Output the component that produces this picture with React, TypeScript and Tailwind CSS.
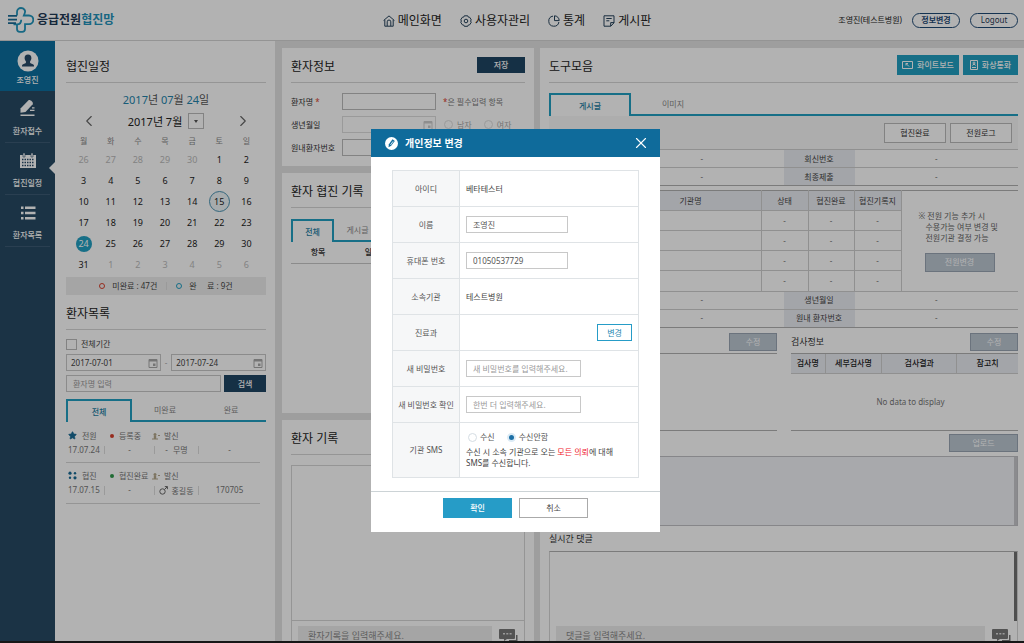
import React, { useState } from 'react';
import { ChevronLeft, ChevronRight, Star, X } from 'lucide-react';

const weekdays = ['월', '화', '수', '목', '금', '토', '일'];

// Monday-first weeks shown for July 2017
const days = [
  ...[26, 27, 28, 29, 30].map((d) => ({ key: `jun-${d}`, day: d, current: false })),
  ...Array.from({ length: 31 }, (_, i) => ({ key: `jul-${i + 1}`, day: i + 1, current: true })),
  ...[1, 2, 3, 4, 5, 6].map((d) => ({ key: `aug-${d}`, day: d, current: false })),
];

const patients = [
  {
    id: 1,
    type: '전원',
    status: '등록중',
    dot: 'bg-[#d8402c]',
    direction: '발신',
    date: '17.07.24',
    male: false,
    name: '무명',
    code: '-',
  },
  {
    id: 2,
    type: '협진',
    status: '협진완료',
    dot: 'bg-[#2f9a4b]',
    direction: '발신',
    date: '17.07.15',
    male: true,
    name: '홍길동',
    code: '170705',
  },
];

function Logo() {
  return (
    <svg viewBox="0 0 26 26" className="h-[26px] w-[26px]" fill="none" strokeWidth="1.8">
      <path
        d="M9 8.500V5a4 4 0 0 1 4-4c3 0 4.800 2.600 3.800 5L15.800 8.500H21a4.300 4.300 0 0 1 0 8.600h-4V22a2.800 2.800 0 0 1-2.800 2.800h-2.400A2.800 2.800 0 0 1 9 22v-4.500"
        stroke="#2196bd"
      />
      <path d="M5.500 17.300H9c3 0 4.200-1.800 4.200-4.600" stroke="#2196bd" />
      <path d="M0 8.800h9M0 12.600h9M0 16.200h8" stroke="#1b6c96" />
    </svg>
  );
}

function HomeIcon() {
  return (
    <svg viewBox="0 0 12 12" className="h-3 w-3" fill="none" stroke="#24415a">
      <path d="M.6 5.500 6 .9l5.400 4.600M1.800 5v6.200h8.400V5M4.200 11V6.800a1.800 1.800 0 0 1 3.600 0V11" />
    </svg>
  );
}

function GearIcon() {
  return (
    <svg viewBox="0 0 12 12" className="h-3 w-3" fill="none" stroke="#24415a">
      <path d="M4.300.8h3.400l.6 1.300 1.400.2 1.600 2.600-.8 1.100.8 1.200-1.600 2.600-1.400.2-.6 1.300H4.300l-.6-1.300-1.400-.2L.7 7.200 1.500 6 .7 4.900l1.600-2.600 1.400-.2z" />
      <circle cx="6" cy="6" r="1.800" />
    </svg>
  );
}

function PieIcon() {
  return (
    <svg viewBox="0 0 12 12" className="h-3 w-3" fill="none" stroke="#24415a">
      <path d="M5 1.100a5.100 5.100 0 1 0 5.900 5.900" />
      <path d="M6.500.8v4.800h4.700A4.800 4.800 0 0 0 6.500.8z" />
    </svg>
  );
}

function BoardIcon() {
  return (
    <svg viewBox="0 0 12 12" className="h-3 w-3" fill="none" stroke="#24415a">
      <path d="M1 .8h10v7L7.800 11.200H1zM3.300 3.500h5.400M3.300 5.800h3M11 7.600H7.700v3.500" />
    </svg>
  );
}

function DateIcon({ className }: { className: string }) {
  return (
    <svg viewBox="0 0 10 10" className={`h-[10px] w-[10px] shrink-0 ${className}`} fill="none" stroke="currentColor">
      <path d="M1 1.500h8v8H1z" />
      <path d="M1 2.500h8" strokeWidth="2" />
      <path d="M5 5.500h2.500V8H5z" fill="currentColor" stroke="none" />
    </svg>
  );
}

const menu = [
  { label: '메인화면', icon: <HomeIcon /> },
  { label: '사용자관리', icon: <GearIcon /> },
  { label: '통계', icon: <PieIcon /> },
  { label: '게시판', icon: <BoardIcon /> },
];

function Header() {
  return (
    <header className="grid h-[41px] grid-cols-[1fr_auto_1fr] items-center border-b border-[#d4d4d4] bg-white pr-[6px] pl-2">
      <a href="#" className="flex items-center gap-[3px] text-xs font-bold text-[#1f3a55]">
        <Logo />
        <span>
          응급전원<span className="text-[#2393ba]">협진망</span>
        </span>
      </a>
      <nav className="flex items-center gap-[18px] pl-2">
        {menu.map((item) => (
          <a key={item.label} href="#" className="flex items-center gap-[3px] pt-0.5 text-xs text-[#222]">
            {item.icon}
            {item.label}
          </a>
        ))}
      </nav>
      <div className="flex items-center justify-end gap-[10px] text-[#222]">
        <span>조영진(테스트병원)</span>
        <button className="h-[15px] w-12 rounded-full border border-[#1f4a75] font-bold text-[#1f4a75]">
          정보변경
        </button>
        <button className="h-[15px] w-12 rounded-full border border-[#1f4a75] text-[#1f3a55]">Logout</button>
      </div>
    </header>
  );
}

function UserIcon() {
  return (
    <svg viewBox="0 0 22 22" className="h-[22px] w-[22px]">
      <circle cx="11" cy="11" r="10.500" fill="#fff" />
      <path
        d="M11 4.500c2.300 0 3.600 1.500 3.400 3.800-.1 1.500-.7 2.400-1.300 3v1.600c1 .7 3.600.9 3.900 2.500v1.100H5v-1.100c.3-1.600 2.900-1.800 3.900-2.500v-1.600c-.6-.6-1.200-1.500-1.300-3C7.400 6 8.700 4.500 11 4.500z"
        fill="#284a67"
      />
    </svg>
  );
}

function WriteIcon() {
  return (
    <svg viewBox="0 0 16 18" className="h-[18px] w-4" fill="#fff">
      <path d="M.5 9.500 8.500 1.300c1.400-1 5.300 2 4.200 3.900L5.500 13 .5 13.800z" />
      <path d="M10 10.800h4.500V12H10zM12 8.300h2.500v1.200H12zM.5 15.500h14v1.600H.5z" />
    </svg>
  );
}

function ScheduleIcon() {
  return (
    <svg viewBox="0 0 16 16" className="h-4 w-4">
      <path d="M0 2h16v13H0z" fill="#fff" />
      <path d="M3 0h2v4H3zM11 0h2v4h-2z" fill="#fff" stroke="#284a67" strokeWidth=".6" />
      <path d="M2 6.500h12M2 9.500h12M2 12.500h12" stroke="#284a67" strokeWidth="1.600" strokeDasharray="1.500 1" />
    </svg>
  );
}

function ListIcon() {
  return (
    <svg viewBox="0 0 16 16" className="h-4 w-4" fill="#fff">
      <path d="M1 1.500h2.500V4H1zM5 1.500h10.500V4H5zM1 6.700h2.500v2.500H1zM5 6.700h10.500v2.500H5zM1 12h2.500v2.500H1zM5 12h10.500v2.500H5z" />
    </svg>
  );
}

function Sidebar() {
  const items = [
    { label: '환자접수', icon: <WriteIcon />, active: false },
    { label: '협진일정', icon: <ScheduleIcon />, active: true },
    { label: '환자목록', icon: <ListIcon />, active: false },
  ];
  return (
    <aside className="w-[55px] shrink-0 bg-[#274a64] font-medium text-white">
      <a href="#" className="flex h-[50px] flex-col items-center gap-1 bg-[#0c6f9f] pt-[9px]">
        <UserIcon />
        조영진
      </a>
      {items.map((item) => (
        <a
          key={item.label}
          href="#"
          className="relative mx-[5px] flex h-[52px] flex-col items-center justify-end gap-[10px] border-b border-[#3d5b74] pb-[7px]"
        >
          {item.icon}
          {item.label}
          {item.active && (
            <span className="absolute top-[19px] -right-[5px] border-y-[6px] border-r-[6px] border-y-transparent border-r-white" />
          )}
        </a>
      ))}
    </aside>
  );
}

function Title({ children, action }: { children: React.ReactNode; action?: React.ReactNode }) {
  return (
    <div className="flex h-[35px] items-center justify-between border-b border-[#d6d6d6]">
      <h2 className="pt-[3px] text-xs text-[#222]">{children}</h2>
      {action}
    </div>
  );
}

function Tabs({ items, first, rest }: { items: string[]; first: string; rest: string }) {
  const [active, setActive] = useState(0);
  return (
    <div className="flex h-[23px]" role="tablist">
      {items.map((item, i) => (
        <button
          key={item}
          role="tab"
          aria-selected={active === i}
          onClick={() => setActive(i)}
          className={`${i === 0 ? first : rest} ${
            active === i
              ? 'border-2 border-b-0 border-[#219fc2] font-medium text-[#1b7da3]'
              : 'border-b-2 border-[#219fc2] text-[#888]'
          }`}
        >
          {item}
        </button>
      ))}
      <span className="flex-1 border-b-2 border-[#219fc2]" />
    </div>
  );
}

function DateField({ label, value }: { label: string; value: string }) {
  return (
    <label className="flex h-[17px] min-w-0 flex-1 items-center border border-[#c8c8c8] pr-0.5 pl-1">
      <input aria-label={label} defaultValue={value} className="w-full min-w-0 text-[#444] outline-none" />
      <DateIcon className="text-[#a8a8a8]" />
    </label>
  );
}

function MonthCalendar() {
  return (
    <div>
      <p className="mt-2 flex h-4 items-center justify-center text-[11px] text-[#555]">
        <span className="text-[#2384ad]">2017</span>년&nbsp;<span className="text-[#2384ad]">07</span>월&nbsp;
        <span className="text-[#2384ad]">24</span>일
      </p>
      <div className="mt-[5px] flex h-[18px] items-center justify-between px-[14px] text-[#666]">
        <button aria-label="이전 달">
          <ChevronLeft className="h-[18px] w-[18px]" strokeWidth={1.500} />
        </button>
        <div className="flex items-center gap-[6px] text-[11px] text-[#222]">
          2017년 7월
          <button
            aria-label="달 선택"
            className="flex h-4 w-4 items-center justify-center border border-[#bbb]"
          >
            <span className="border-x-[2px] border-t-[3px] border-x-transparent border-t-[#555]" />
          </button>
        </div>
        <button aria-label="다음 달">
          <ChevronRight className="h-[18px] w-[18px]" strokeWidth={1.500} />
        </button>
      </div>
      <div className="mr-[6px] ml-1 mt-[3px] grid grid-cols-7 text-center">
        {weekdays.map((w) => (
          <span key={w} className="flex h-4 items-center justify-center text-[#888]">
            {w}
          </span>
        ))}
        {days.map((d) => {
          let look = d.current ? 'text-[#222]' : 'text-[#bbb]';
          if (d.current && d.day === 24) look = 'h-4 w-4 bg-[#219fc2] text-white';
          if (d.current && d.day === 15) look = 'h-[21px] w-[21px] border border-[#4a93b3] bg-[#eef5f8] text-[#222]';
          return (
            <span key={d.key} className="flex h-[21px] items-center justify-center text-[9px]">
              <span className={`flex items-center justify-center rounded-full ${look}`}>{d.day}</span>
            </span>
          );
        })}
      </div>
      <div className="mt-0.5 flex h-[18px] items-center justify-center gap-[7px] bg-[#ededed] text-[#444]">
        <span className="h-[6px] w-[6px] rounded-full border border-[#d8402c]" />
        <span>미완료 : 47건</span>
        <span className="mx-0.5 h-2 border-l border-[#ddd]" />
        <span className="h-[6px] w-[6px] rounded-full border border-[#219fc2]" />
        <span className="whitespace-pre">완     료 : 9건</span>
      </div>
    </div>
  );
}

function PatientRow({ patient }: { patient: (typeof patients)[number] }) {
  return (
    <li className="mr-[6px] flex h-[41px] flex-col justify-end gap-[6px] border-b border-[#d6d6d6] pb-2 text-[#777]">
      <div className="grid grid-cols-[42px_42px_1fr] pl-0.5">
        <span className="flex items-center gap-[5px]">
          {patient.male ? (
            <svg viewBox="0 0 9 9" className="h-[9px] w-[9px]" fill="#1b6c96">
              <circle cx="2" cy="2.200" r="1.600" />
              <circle cx="7" cy="2.200" r="1.200" />
              <circle cx="2" cy="6.800" r="1.200" />
              <circle cx="7" cy="6.800" r="1.600" />
            </svg>
          ) : (
            <Star className="h-[9px] w-[9px] fill-[#1b6c96] text-[#1b6c96]" />
          )}
          {patient.type}
        </span>
        <span className="flex items-center gap-[5px] whitespace-nowrap">
          <span className={`h-1 w-1 shrink-0 rounded-full ${patient.dot}`} />
          {patient.status}
        </span>
        <span className="flex items-center gap-1">
          <svg viewBox="0 0 8 8" className="h-2 w-2" fill="#b5a88c">
            <circle cx="3" cy="2.500" r="1.500" />
            <path d="M0 7.500V6.500h1.800V4h2.400v2.500H6v1zM6 3h2v1H6z" />
          </svg>
          {patient.direction}
        </span>
      </div>
      <div className="grid grid-cols-[36px_50px_45px_1fr] pl-0.5 text-center">
        <span className="text-left">{patient.date}</span>
        <span className="border-l border-[#ddd]">-</span>
        <span className="flex items-center justify-center gap-[3px] border-x border-[#ddd]">
          {patient.male ? (
            <svg viewBox="0 0 9 9" className="h-[9px] w-[9px]" fill="none" stroke="#666">
              <circle cx="3.500" cy="5.500" r="2.700" />
              <path d="M5.500 3.500 8.300.7M5.800.6h2.600v2.600" />
            </svg>
          ) : (
            <span>-&nbsp;</span>
          )}
          {patient.name}
        </span>
        <span>{patient.code}</span>
      </div>
    </li>
  );
}

function SchedulePanel() {
  return (
    <section className="w-[220px] shrink-0 bg-white pt-[7px] pr-[9px] pl-[11px]">
      <Title>협진일정</Title>
      <MonthCalendar />
      <Title>환자목록</Title>
      <label className="mt-2 flex h-3 items-center gap-1 text-[#444]">
        <input type="checkbox" className="h-[11px] w-[11px] appearance-none border border-[#bbb] checked:bg-[#219fc2]" />
        전체기간
      </label>
      <div className="mt-1 flex items-center gap-1 text-[#aaa]">
        <DateField label="시작일" value="2017-07-01" />
        -
        <DateField label="종료일" value="2017-07-24" />
      </div>
      <div className="mt-1 flex gap-[3px]">
        <input
          aria-label="환자명"
          placeholder="환자명 입력"
          className="h-[17px] min-w-0 flex-1 border border-[#c8c8c8] px-[6px] placeholder:text-[#999]"
        />
        <button className="h-[17px] w-[42px] bg-[#1f4563] font-medium text-white">검색</button>
      </div>
      <div className="mt-[7px]">
        <Tabs items={['전체', '미완료', '완료']} first="w-[66px]" rest="w-[66px]" />
      </div>
      <ul>
        {patients.map((p) => (
          <PatientRow key={p.id} patient={p} />
        ))}
      </ul>
    </section>
  );
}

function ChatIcon() {
  return (
    <svg viewBox="0 0 20 15" className="h-[15px] w-5">
      <path d="M2 3h14a1 1 0 0 1 1 1v8a1 1 0 0 1-1 1H9l-3 2v-2H2a1 1 0 0 1-1-1V4a1 1 0 0 1 1-1z" fill="#777" />
      <path d="M18 9h1.500v6H11v-1h7z" fill="#777" />
      <path d="M5 7h2v1.500H5zM8.300 7h2v1.500h-2zM11.600 7h2v1.500h-2z" fill="#ddd" />
    </svg>
  );
}

function CommentBar({ placeholder }: { placeholder: string }) {
  return (
    <div className="flex items-end gap-[6px] px-[6px] pt-[5px]">
      <input
        aria-label={placeholder}
        placeholder={placeholder}
        className="h-[15px] min-w-0 flex-1 bg-[#ededed] px-[10px] pt-1 text-[9px] placeholder:text-[#888]"
      />
      <button aria-label="등록">
        <ChatIcon />
      </button>
    </div>
  );
}

function PatientColumn() {
  return (
    <div className="flex w-[252px] shrink-0 flex-col gap-[7px] pt-[7px]">
      <section className="h-[118px] bg-white px-[9px]">
        <Title action={<button className="h-4 w-12 bg-[#1f4563] font-medium text-white">저장</button>}>환자정보</Title>
        <div className="mt-[10px] grid grid-cols-[51px_94px_1fr] items-center gap-y-[6px] text-[#333]">
          <label htmlFor="patient-name">
            환자명 <span className="text-[#d8402c]">*</span>
          </label>
          <input id="patient-name" className="h-[17px] border border-[#bbb] px-1" />
          <span className="pl-[7px] text-[#777]">
            <span className="text-[#d8402c]">*</span>은 필수입력 항목
          </span>
          <label htmlFor="birth">생년월일</label>
          <span className="flex h-[17px] items-center border border-[#ddd] pr-0.5">
            <input id="birth" className="w-full min-w-0 px-1" />
            <DateIcon className="text-[#ccc]" />
          </span>
          <span className="flex gap-3 pl-2 text-[#aaa]">
            <label className="flex items-center gap-1">
              <input type="radio" name="sex" className="h-[9px] w-[9px] appearance-none rounded-full border border-[#ddd]" />
              남자
            </label>
            <label className="flex items-center gap-1">
              <input type="radio" name="sex" className="h-[9px] w-[9px] appearance-none rounded-full border border-[#ddd]" />
              여자
            </label>
          </span>
          <label htmlFor="patient-no" className="whitespace-nowrap">
            원내환자번호
          </label>
          <input id="patient-no" className="h-[17px] border border-[#bbb] px-1" />
        </div>
      </section>
      <section className="h-[240px] bg-white px-[9px]">
        <Title>환자 협진 기록</Title>
        <div className="mt-[11px]">
          <Tabs items={['전체', '게시글', '이미지']} first="w-[43px]" rest="w-[47px]" />
        </div>
        <table className="w-full table-fixed">
          <thead>
            <tr className="h-[21px] border-b border-[#c8c8c8] text-[#333]">
              <th className="w-[54px] font-medium">항목</th>
              <th className="w-[54px] font-medium">일자</th>
              <th />
            </tr>
          </thead>
        </table>
      </section>
      <section className="flex flex-1 flex-col bg-white px-[9px]">
        <Title>환자 기록</Title>
        <div className="mt-[10px] flex flex-1 flex-col border border-b-0 border-[#d6d6d6]">
          <div className="flex-1 border-b border-[#d6d6d6]" />
          <CommentBar placeholder="환자기록을 입력해주세요." />
        </div>
      </section>
    </div>
  );
}

function PairTable({ rows }: { rows: string[] }) {
  return (
    <table className="w-full table-fixed border-y border-[#b0b0b0] text-center">
      <colgroup>
        <col className="w-[71px]" />
        <col />
        <col className="w-[71px]" />
        <col />
      </colgroup>
      <tbody>
        {rows.map((label) => (
          <tr key={label} className="h-[18px] border-t border-[#cfcfcf]">
            <td className="bg-[#eaecf2]" />
            <td className="text-[#777]">-</td>
            <th scope="row" className="bg-[#eaecf2] font-normal text-[#444]">
              {label}
            </th>
            <td className="text-[#777]">-</td>
          </tr>
        ))}
      </tbody>
    </table>
  );
}

function HospitalTable() {
  return (
    <table className="mt-1 w-full table-fixed border-t border-[#b0b0b0] text-center">
      <colgroup>
        <col className="w-[71px]" />
        <col />
        <col className="w-[47px]" />
        <col className="w-[46px]" />
        <col className="w-[47px]" />
        <col className="w-[117px]" />
      </colgroup>
      <tbody>
        <tr className="h-5 text-[#444]">
          <td className="border-r border-[#cfcfcf] bg-[#eaecf2]" />
          <th className="border-r border-[#cfcfcf] bg-[#eaecf2] font-normal">기관명</th>
          <th className="border-r border-[#cfcfcf] bg-[#eaecf2] font-normal">상태</th>
          <th className="border-r border-[#cfcfcf] bg-[#eaecf2] font-normal">협진완료</th>
          <th className="border-r border-[#cfcfcf] bg-[#eaecf2] font-normal">협진기록지</th>
          <td rowSpan={5} className="pl-[17px] text-left text-[#666]">
            <p className="leading-[11px]">
              ※ 전원 기능 추가 시
              <span className="block pl-[7px]">수용가능 여부 변경 및</span>
              <span className="block pl-[7px]">전원기관 결정 가능</span>
            </p>
            <button className="mt-[10px] ml-[6px] h-[19px] w-[70px] border border-[#9aa5b3] bg-[#bcc7d2] text-white">
              전원변경
            </button>
          </td>
        </tr>
        {[1, 2, 3, 4].map((n) => (
          <tr key={n} className="h-5 text-[#777]">
            <td className="border-t border-r border-[#cfcfcf]" />
            <td className="border-t border-r border-[#cfcfcf]" />
            <td className="border-t border-r border-[#cfcfcf]">-</td>
            <td className="border-t border-r border-[#cfcfcf]">-</td>
            <td className="border-t border-r border-[#cfcfcf]">-</td>
          </tr>
        ))}
      </tbody>
    </table>
  );
}

function EditButton() {
  return <button className="h-[18px] w-12 border border-[#9aa5b3] bg-[#bcc7d2] text-white">수정</button>;
}

function ToolsPanel() {
  return (
    <div className="flex min-w-0 flex-1 flex-col pt-[7px]">
      <section className="flex flex-1 flex-col bg-white pr-[6px] pl-[9px]">
        <Title
          action={
            <div className="flex gap-1 font-medium text-white">
              <button className="flex h-5 w-[62px] items-center justify-center gap-1 bg-[#219fc2]">
                <svg viewBox="0 0 11 10" className="h-[10px] w-[11px]" fill="none" stroke="#fff">
                  <path d="M.5 1.500h10v7H.5z" />
                  <path d="m4 3.500 3 3M4 5.500v-2h2" />
                </svg>
                화이트보드
              </button>
              <button className="flex h-5 w-[55px] items-center justify-center gap-1 bg-[#219fc2]">
                <svg viewBox="0 0 8 10" className="h-[10px] w-2" fill="none" stroke="#fff">
                  <path d="M.5.5h7v9h-7zM2 7.500h4M2.500 5.500c0-1.500 3-1.500 3 0" />
                  <circle cx="4" cy="3" r="1" />
                </svg>
                화상통화
              </button>
            </div>
          }
        >
          도구모음
        </Title>
        <div className="mt-[10px]">
          <Tabs items={['게시글', '이미지']} first="w-[82px]" rest="w-[84px]" />
        </div>
        <div className="flex h-[33px] items-center justify-end gap-1 bg-[#f8f8f8] pr-[6px]">
          <button className="h-5 w-[62px] border border-[#bbb] bg-white text-[#333]">협진완료</button>
          <button className="h-5 w-[62px] border border-[#bbb] bg-white text-[#333]">전원로그</button>
        </div>
        <PairTable rows={['회신번호', '최종제출']} />
        <HospitalTable />
        <PairTable rows={['생년월일', '원내 환자번호']} />
        <div className="mt-[5px] grid grid-cols-[228fr_227fr] gap-[14px]">
          <div className="flex h-[98px] flex-col border-b border-[#b0b0b0]">
            <div className="flex h-[21px] items-start justify-end border-b border-[#b0b0b0]">
              <EditButton />
            </div>
          </div>
          <div className="flex h-[98px] flex-col border-b border-[#b0b0b0]">
            <div className="flex h-[21px] items-start justify-between border-b border-[#b0b0b0]">
              <h3 className="pt-1 text-[9px] text-[#333]">검사정보</h3>
              <EditButton />
            </div>
            <table className="w-full table-fixed text-center">
              <thead>
                <tr className="h-5 border-b border-[#cfcfcf] bg-[#eaecf2] text-[#222]">
                  <th className="w-[15%] border-r border-[#cfcfcf] font-medium">검사명</th>
                  <th className="w-[25%] border-r border-[#cfcfcf] font-medium">세부검사명</th>
                  <th className="w-[33%] border-r border-[#cfcfcf] font-medium">검사결과</th>
                  <th className="font-medium">참고치</th>
                </tr>
              </thead>
              <tbody>
                <tr className="h-14">
                  <td colSpan={4} className="pl-3 text-[#777]">
                    No data to display
                  </td>
                </tr>
              </tbody>
            </table>
          </div>
        </div>
        <div className="flex h-[25px] items-center justify-end">
          <button className="h-[18px] w-[69px] border border-[#9aa5b3] bg-[#bcc7d2] text-white">업로드</button>
        </div>
        <div className="flex h-[70px] justify-end border border-[#c0c0c4] bg-[#f1f2f6]">
          <span className="w-[3px] bg-[#c8c8cc]" />
        </div>
        <h3 className="flex h-[25px] items-center text-[9px] text-[#333]">실시간 댓글</h3>
        <div className="flex flex-1 flex-col border border-b-0 border-[#d6d6d6] border-t-[#b0b0b0]">
          <div className="flex flex-1 justify-end">
            <span className="w-[3px] bg-[#717171]" />
          </div>
          <CommentBar placeholder="댓글을 입력해주세요." />
        </div>
      </section>
    </div>
  );
}

function Field({ label, id, tall, children }: { label: string; id?: string; tall?: boolean; children?: React.ReactNode }) {
  return (
    <tr className={`${tall ? 'h-[55px]' : 'h-9'} border border-[#dfe3e6]`}>
      <th scope="row" className="w-[67px] border-r border-[#dfe3e6] bg-[#f6f7f8] text-center font-normal text-[#555]">
        {id ? <label htmlFor={id}>{label}</label> : label}
      </th>
      <td className="px-[6px] text-[#444]">{children}</td>
    </tr>
  );
}

function ProfileDialog({ onClose }: { onClose: () => void }) {
  const [sms, setSms] = useState('off');
  const input = 'block h-[17px] border border-[#c8c8c8] px-[6px] text-[#555] placeholder:text-[#999]';
  const radio =
    'h-[9px] w-[9px] appearance-none rounded-full border border-[#d5dde3] checked:border-2 checked:border-[#dcebf5] checked:bg-[#1c6fa5]';

  return (
    <div className="fixed inset-0 flex items-start justify-center bg-black/30 pt-[129px] pl-[7px]">
      <div role="dialog" aria-label="개인정보 변경" className="w-[289px] bg-white">
        <div className="flex h-7 items-center justify-between bg-[#0f6b9b] pr-[10px] pl-[14px] text-white">
          <h2 className="flex items-center gap-[7px] text-[10px] font-bold">
            <svg viewBox="0 0 13 13" className="h-[13px] w-[13px]">
              <circle cx="6.500" cy="6.500" r="6.500" fill="#fff" />
              <path d="m3.500 10.200.4-3 3.600-5 2.300 1.700-3.600 4.900z" fill="#0f6b9b" />
              <path d="m5.500 8 2.600-3.700" stroke="#fff" strokeWidth=".8" />
            </svg>
            개인정보 변경
          </h2>
          <button aria-label="닫기" onClick={onClose}>
            <X className="h-[18px] w-[18px]" strokeWidth={1.500} />
          </button>
        </div>
        <form onSubmit={(e) => e.preventDefault()}>
          <div className="px-[21px] pt-[13px] pb-[13px]">
            <table className="w-full table-fixed">
              <tbody>
                <Field label="아이디">베타테스터</Field>
                <Field label="이름" id="name">
                  <input id="name" defaultValue="조영진" className={`w-[102px] ${input}`} />
                </Field>
                <Field label="휴대폰 번호" id="phone">
                  <input id="phone" defaultValue="01050537729" className={`w-[102px] ${input}`} />
                </Field>
                <Field label="소속기관">테스트병원</Field>
                <Field label="진료과">
                  <button
                    type="button"
                    className="ml-auto block h-[17px] w-[35px] border border-[#269cc7] text-[#1b86b0]"
                  >
                    변경
                  </button>
                </Field>
                <Field label="새 비밀번호" id="password">
                  <input
                    id="password"
                    type="password"
                    placeholder="새 비밀번호를 입력해주세요."
                    className={`w-[115px] ${input}`}
                  />
                </Field>
                <Field label="새 비밀번호 확인" id="password-confirm">
                  <input
                    id="password-confirm"
                    type="password"
                    placeholder="한번 더 입력해주세요."
                    className={`w-[115px] ${input}`}
                  />
                </Field>
                <Field label="기관 SMS" tall>
                  <div className="flex gap-3 pl-0.5 text-[#555]">
                    <label className="flex items-center gap-[3px]">
                      <input
                        type="radio"
                        name="sms"
                        checked={sms === 'on'}
                        onChange={() => setSms('on')}
                        className={radio}
                      />
                      수신
                    </label>
                    <label className="flex items-center gap-[3px]">
                      <input
                        type="radio"
                        name="sms"
                        checked={sms === 'off'}
                        onChange={() => setSms('off')}
                        className={radio}
                      />
                      수신안함
                    </label>
                  </div>
                  <p className="mt-1 leading-[11px]">
                    수신 시 소속 기관으로 오는 <span className="text-[#f0202c]">모든 의뢰</span>에 대해
                    <br />
                    SMS를 수신합니다.
                  </p>
                </Field>
              </tbody>
            </table>
          </div>
          <div className="flex h-[41px] justify-center gap-[7px] border-t border-[#ccd3d6] pt-[6px]">
            <button type="submit" className="h-5 w-[69px] bg-[#269cc7] font-medium text-white">
              확인
            </button>
            <button type="button" onClick={onClose} className="h-5 w-[69px] border border-[#aaa] text-[#444]">
              취소
            </button>
          </div>
        </form>
      </div>
    </div>
  );
}

export default function App() {
  const [open, setOpen] = useState(true);

  return (
    <div className="flex min-h-screen flex-col bg-[#e3e3e3] font-['Noto_Sans','Noto_Sans_CJK_KR',sans-serif] text-[8px] leading-none">
      <Header />
      <main className="flex flex-1">
        <Sidebar />
        <SchedulePanel />
        <div className="flex min-w-0 flex-1 gap-[6px] pl-[7px]">
          <PatientColumn />
          <ToolsPanel />
        </div>
      </main>
      <footer className="h-0.5 bg-[#222]" />
      {open && <ProfileDialog onClose={() => setOpen(false)} />}
    </div>
  );
}
